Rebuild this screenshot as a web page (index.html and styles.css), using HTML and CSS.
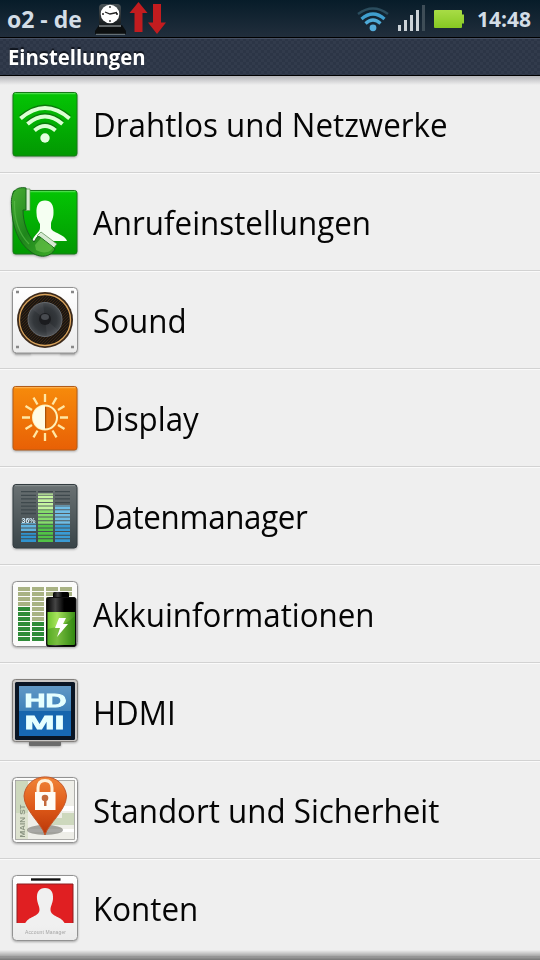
FILE: index.html
```
<!DOCTYPE html>
<html lang="de">
<head>
    <meta charset="UTF-8">
    <meta name="viewport" content="width=device-width, initial-scale=1.0">
    <title>Einstellungen</title>
    <link rel="stylesheet" href="styles.css">
</head>
<body>
    <div class="phone">
        <header class="status-bar">
            <span class="carrier">o2 - de</span>
            <svg class="status-left" width="74" height="37" viewBox="94 0 74 37">
                <defs>
                    <linearGradient id="hat" x1="0" y1="0" x2="0" y2="1"><stop offset="0" stop-color="#4a5357"/><stop offset="1" stop-color="#15191b"/></linearGradient>
                </defs>
                <rect x="99" y="4" width="22" height="22" rx="4" fill="url(#hat)"/>
                <path d="M99 25H122L126 31V34H95V31Z" fill="#0c0f10"/>
                <path d="M99 26H121" stroke="#b8c0c2" stroke-width="1"/>
                <path d="M96 34.3H125" stroke="#8d9598" stroke-width=".8"/>
                <circle cx="110" cy="14" r="9.3" fill="#fff"/>
                <path d="M110 6V8M110 20V22M102 14H104M116 14H118M105 12L110 14L117 12.500" stroke="#222" stroke-width="1.300" fill="none"/>
                <path d="M138.500 2L147.500 13H142.500V32H134.500V13H129.500Z" fill="#c21c1f"/>
                <path d="M157 34L166 22.500H161V4H153V22.500H148Z" fill="#c21c1f"/>
            </svg>
            <svg class="status-right" width="110" height="37" viewBox="356 0 110 37">
                <defs>
                    <linearGradient id="batt" x1="0" y1="0" x2="0" y2="1"><stop offset="0" stop-color="#a8dc46"/><stop offset="1" stop-color="#86c922"/></linearGradient>
                </defs>
                <g fill="none" stroke-width="3.200">
                    <path d="M358 14Q373 3 388 14" stroke="#2b4d5e" stroke-width="2.400"/>
                    <path d="M361.500 19Q373 9 384.500 19" stroke="#3f9fcf"/>
                    <path d="M365.500 23.500Q373 16.500 380.500 23.500" stroke="#4fabd8"/>
                </g>
                <circle cx="373" cy="27.800" r="3.400" fill="#55addb"/>
                <g fill="#ccd3d8">
                    <rect x="398" y="25" width="3" height="6"/><rect x="404" y="20" width="3" height="11"/>
                    <rect x="410" y="15" width="3" height="16"/><rect x="416" y="10" width="3" height="21"/>
                </g>
                <rect x="422" y="5" width="3" height="26" fill="#3e4d57"/>
                <path d="M435 10H461Q462 10 462 11V14.500H464V23.500H462V27Q462 28 461 28H435Q434 28 434 27V11Q434 10 435 10Z" fill="url(#batt)"/>
            </svg>
            <span class="clock">14:48</span>
        </header>
        <h1 class="title-bar"><span>Einstellungen</span></h1>

        <ul class="settings">
            <li class="row">
                <svg class="icon" viewBox="0 0 93 98">
                    <defs>
                        <linearGradient id="green" x1="0" y1="0" x2="0" y2="1"><stop offset="0" stop-color="#04c504"/><stop offset="1" stop-color="#029802"/></linearGradient>
                    </defs>
                    <rect x="13" y="17.500" width="64" height="63.500" rx="2.500" fill="url(#green)" stroke="#167a16"/>
                    <path d="M14.500 18.700H75.500" stroke="#5be25b"/>
                    <g fill="none" stroke="#0a7a0a" stroke-width="4" transform="translate(0 -1.500)">
                        <path d="M20.500 43.500Q45 22.500 69.500 43.500"/><path d="M27.500 49Q45 34 62.500 49"/><path d="M34.500 55.500Q45 46.500 55.500 55.500"/>
                    </g>
                    <g fill="none" stroke="#dcffd4" stroke-width="4">
                        <path d="M20.500 43.500Q45 22.500 69.500 43.500"/><path d="M27.500 49Q45 34 62.500 49"/><path d="M34.500 55.500Q45 46.500 55.500 55.500"/>
                    </g>
                    <circle cx="45" cy="63" r="4.700" fill="#e4ffdf"/>
                </svg>
                <span class="label">Drahtlos und Netzwerke</span>
            </li>
            <li class="row">
                <svg class="icon" viewBox="0 0 93 98">
                    <defs>
                        <linearGradient id="phone" x1="0" y1="0" x2="1" y2="1"><stop offset="0" stop-color="#49ad35"/><stop offset=".5" stop-color="#1e861b"/><stop offset="1" stop-color="#3fae2a"/></linearGradient>
                    </defs>
                    <rect x="13" y="17.500" width="64" height="63.500" rx="2.500" fill="url(#green)" stroke="#167a16"/>
                    <path d="M24 18.700H75.500" stroke="#5be25b"/>
                    <path d="M45 27.500C51 27.500 54 32 53.500 40C53.500 46 51 48 51 51V55C52 60 65 61 67 68H32C34 62 40 59 40 55V51C38 48 36.500 45 36.500 40C36 32 39 27.500 45 27.500Z" fill="#f5fff2"/>
                    <path d="M25 16H30V37.500H25Z" fill="#d7ead3" stroke="#5b9b52" stroke-width=".7"/>
                    <path d="M41 59L57 71L53 76L37 63Z" fill="#d7ead3" stroke="#4e8647" stroke-width=".7"/>
                    <path d="M26 15C15 13 10.500 20 11.500 33C12 53 18 70 31 79C39 85 50 85 55 76L53 74L40 64C37 62 36 66 34 69C28 62 23 50 23 37H26Z" fill="url(#phone)" stroke="#17641a"/>
                    <path d="M14.500 28C14 46 19 61 29 71" fill="none" stroke="#5fc04e" stroke-width="1.200" opacity=".6"/>
                    <path d="M35 72L41 65L53 74C51 80 43 81 36 77Z" fill="#6cc44e" opacity=".6"/>
                </svg>
                <span class="label">Anrufeinstellungen</span>
            </li>
            <li class="row">
                <svg class="icon" viewBox="0 0 93 98">
                    <defs>
                        <linearGradient id="white" x1="0" y1="0" x2="0" y2="1"><stop offset="0" stop-color="#fff"/><stop offset="1" stop-color="#ebebeb"/></linearGradient>
                        <radialGradient id="cone"><stop offset="0" stop-color="#25272a"/><stop offset=".7" stop-color="#34383c"/><stop offset="1" stop-color="#4b4f53"/></radialGradient>
                        <pattern id="mesh" width="3" height="3" patternUnits="userSpaceOnUse"><path d="M0 3L3 0" stroke="#4b3015" stroke-width=".6"/></pattern>
                    </defs>
                    <path d="M15 82.500H31M60 82.500H75" stroke="#a0a0a0" stroke-width="1.500"/>
                    <rect x="12.500" y="16.500" width="65" height="65.500" rx="4" fill="url(#white)" stroke="#929292"/>
                    <path d="M16 21H19M71 21H74M16 76H19M71 76H74" stroke="#888" stroke-width="2.500"/>
                    <circle cx="45" cy="49" r="28" fill="#3c2a1b"/>
                    <circle cx="45" cy="49" r="25.500" fill="#1c1611" stroke="#d9a35c" stroke-width="1.300"/>
                    <circle cx="45" cy="49" r="24" fill="url(#mesh)"/>
                    <circle cx="45" cy="48.500" r="17" fill="url(#cone)" stroke="#65696e"/>
                    <path d="M45 48L32 38A17 17 0 0 1 43 32ZM45 48L58 59A17 17 0 0 1 47 65Z" fill="#777c82" opacity=".15"/>
                    <circle cx="45" cy="48" r="6" fill="#1b1c1f"/>
                    <ellipse cx="45" cy="46" rx="4" ry="3" fill="#484b50"/>
                </svg>
                <span class="label">Sound</span>
            </li>
            <li class="row">
                <svg class="icon" viewBox="0 0 93 98">
                    <defs>
                        <linearGradient id="orange" x1="0" y1="0" x2="0" y2="1"><stop offset="0" stop-color="#f78b0b"/><stop offset="1" stop-color="#e86005"/></linearGradient>
                    </defs>
                    <rect x="13" y="17.500" width="64" height="63.500" rx="2.500" fill="url(#orange)" stroke="#b35c18"/>
                    <path d="M14.500 18.700H75.500" stroke="#ffb85a"/>
                    <path d="M45 25V33M45 64V72M22 48.500H30M60 48.500H68M33.500 28.600L37.500 35.500M52.500 61.500L56.500 68.400M56.500 28.600L52.500 35.500M37.500 61.500L33.500 68.400M25.500 37L32 41M58 56L64.500 60M64.500 37L58 41M32 56L25.500 60" stroke="#ffe7a4" stroke-width="2.300" fill="none"/>
                    <circle cx="45" cy="48.500" r="12" fill="#e8750f" stroke="#fff0b8" stroke-width="2"/>
                    <path d="M45 36.500A12 12 0 0 0 45 60.500Z" fill="#fffbe4"/>
                    <path d="M45.700 38V59" stroke="#9d4a05"/>
                </svg>
                <span class="label">Display</span>
            </li>
            <li class="row">
                <svg class="icon" viewBox="0 0 93 98">
                    <defs>
                        <linearGradient id="slate" x1="0" y1="0" x2="0" y2="1"><stop offset="0" stop-color="#6a7173"/><stop offset="1" stop-color="#394448"/></linearGradient>
                    </defs>
                    <rect x="13" y="17.500" width="64" height="63.500" rx="3" fill="url(#slate)" stroke="#333c40"/>
                    <path d="M15 18.700H75" stroke="#8d9496"/>
                    <!-- empty segments, then the filled part of each column -->
                    <g fill="none" stroke-width="15">
                        <path d="M28.500 24V48M62.500 24V38" stroke="#3e484c" stroke-dasharray="1.300 2.340"/>
                        <path d="M45.500 24V26" stroke="#3e484c" stroke-dasharray="1.300 2.340"/>
                        <path d="M28.500 75V66" stroke="#2f93cf" stroke-dasharray="2.640 1"/>
                        <path d="M28.500 64.100V56" stroke="#62b4e0" stroke-dasharray="2.640 1"/>
                        <path d="M62.500 75V57" stroke="#3a9bd4" stroke-dasharray="2.640 1"/>
                        <path d="M62.500 56.800V38" stroke="#70bde5" stroke-dasharray="2.640 1"/>
                        <path d="M45.500 75V57" stroke="#51c346" stroke-dasharray="2.640 1"/>
                        <path d="M45.500 56.800V42" stroke="#86dc6c" stroke-dasharray="2.640 1"/>
                        <path d="M45.500 42.240V26.500" stroke="#c5f5a0" stroke-dasharray="2.640 1"/>
                    </g>
                    <text class="percent" x="21.500" y="55.500">36%</text>
                </svg>
                <span class="label label-tight">Datenmanager</span>
            </li>
            <li class="row">
                <svg class="icon" viewBox="0 0 93 98">
                    <defs>
                        <linearGradient id="cell" x1="0" y1="0" x2="1" y2="0"><stop offset="0" stop-color="#6fc72f"/><stop offset=".35" stop-color="#a7e35c"/><stop offset="1" stop-color="#3a8f16"/></linearGradient>
                        <linearGradient id="cellcap" x1="0" y1="0" x2="1" y2="0"><stop offset="0" stop-color="#000"/><stop offset=".3" stop-color="#454545"/><stop offset=".6" stop-color="#000"/></linearGradient>
                    </defs>
                    <rect x="12.500" y="16.500" width="65" height="65" rx="4" fill="#fbfbfa" stroke="#929292"/>
                    <g fill="none" stroke-width="12" stroke-dasharray="4 1">
                        <path d="M24 22V42M38 22V57M52 22V42M66 22V42" stroke="#a8b283"/>
                        <path d="M24 42V76M38 57V76" stroke="#2e8b38"/>
                    </g>
                    <rect x="53" y="27" width="16" height="6" rx="1.500" fill="url(#cellcap)"/>
                    <rect x="46.500" y="32.500" width="29.500" height="49" rx="2" fill="url(#cellcap)" stroke="#111"/>
                    <path d="M47.500 47H75V78.500Q75 80 73.500 80H49Q47.500 80 47.500 78.500Z" fill="url(#cell)"/>
                    <path d="M47.500 64Q64 62 75 51V80H47.500Z" fill="#247b0b" opacity=".35"/>
                    <path d="M59 53L66 53L63 59H68L57 72L60 63H55Z" fill="#fff"/>
                </svg>
                <span class="label">Akkuinformationen</span>
            </li>
            <li class="row">
                <svg class="icon" viewBox="0 0 93 98">
                    <defs>
                        <linearGradient id="screen" x1="0" y1="0" x2="0" y2="1"><stop offset="0" stop-color="#6198c6"/><stop offset=".49" stop-color="#3f82ba"/><stop offset=".5" stop-color="#1765ac"/><stop offset="1" stop-color="#1768b5"/></linearGradient>
                    </defs>
                    <rect x="29" y="78" width="32" height="5" rx="1" fill="#6c6c6c"/>
                    <rect x="12.500" y="16.500" width="65" height="62" rx="3" fill="#c9c7c5" stroke="#83807d"/>
                    <rect x="15" y="19" width="60" height="58" rx="1.500" fill="#0a1524"/>
                    <rect x="19" y="23" width="52" height="50" fill="url(#screen)"/>
                    <text class="hdmi" x="24.500" y="44" textLength="42" lengthAdjust="spacingAndGlyphs">HD</text>
                    <text class="hdmi" x="24.500" y="65.500" textLength="40" lengthAdjust="spacingAndGlyphs">MI</text>
                </svg>
                <span class="label">HDMI</span>
            </li>
            <li class="row">
                <svg class="icon" viewBox="0 0 93 98">
                    <defs>
                        <linearGradient id="pin" x1="0" y1="0" x2="0" y2="1"><stop offset="0" stop-color="#f08437"/><stop offset=".5" stop-color="#df5b19"/><stop offset="1" stop-color="#b93508"/></linearGradient>
                    </defs>
                    <rect x="12.500" y="16.500" width="65" height="65" rx="4" fill="#fcfcfb" stroke="#929292"/>
                    <rect x="15.500" y="19.500" width="59" height="59" fill="#eeeee8" stroke="#9c9c98" stroke-width=".8"/>
                    <path d="M16 20H28V52H16ZM62 52H74V64H50V57H62Z" fill="#cdd8bd"/>
                    <path d="M16 52H28V78H16Z" fill="#dde2cf"/>
                    <path d="M28 68H74V71H28ZM60 45H74V50H60Z" fill="#fff"/>
                    <text class="street" transform="translate(25 76.500) rotate(-90)" textLength="33" lengthAdjust="spacingAndGlyphs">MAIN ST</text>
                    <ellipse cx="45" cy="69" rx="18" ry="5" fill="#6e6e68" opacity=".6"/>
                    <path d="M45 74C42 63 24 49 24 35A21.300 20.500 0 0 1 66.500 35C66.500 49 48 63 45 74Z" fill="url(#pin)" stroke="#c4572a"/>
                    <path d="M38 33V27Q38 19.500 45 19.500Q52 19.500 52 27V33" fill="none" stroke="#fff1da" stroke-width="3"/>
                    <rect x="35" y="31" width="20.500" height="18" fill="#fffdf7"/>
                    <circle cx="45" cy="37" r="3.300" fill="#c46a3b"/><path d="M44 38H46.500V45H44Z" fill="#c46a3b"/>
                </svg>
                <span class="label">Standort und Sicherheit</span>
            </li>
            <li class="row">
                <svg class="icon" viewBox="0 0 93 98">
                    <rect x="12.500" y="16.500" width="65" height="65" rx="4" fill="url(#white)" stroke="#929292"/>
                    <rect x="31" y="19.300" width="29.500" height="2.400" fill="#111"/>
                    <rect x="17" y="25" width="56" height="39" fill="#e01f22"/>
                    <path d="M17 64V25H73V64" fill="none" stroke="#8d1e20"/>
                    <path d="M45 29C51 29 53.500 33 53 40C52.500 45 50.500 47 50.500 51C51 58 62 57 65 65H25C28 57 39 58 39.500 51C39.500 47 37.500 45 37 40C36.500 33 39 29 45 29Z" fill="#f0f0f0"/>
                    <text class="caption" x="25" y="74.500" textLength="41">Account Manager</text>
                </svg>
                <span class="label">Konten</span>
            </li>
        </ul>
    </div>
</body>
</html>
```

FILE: styles.css
```
* {
    box-sizing: border-box;
}
body {
    margin: 0;
    background: #efefef;
    font-family: "Open Sans", "Noto Sans", sans-serif;
}
.phone {
    position: relative;
    width: 540px;
    height: 960px;
    overflow: hidden;
}
.status-bar {
    display: flex;
    align-items: center;
    height: 37px;
    padding: 0 9px 0 7px;
    background: linear-gradient(#071c29, #212e3c);
    color: #d3dde6;
    font-weight: 700;
}
.carrier {
    width: 87px;
    font-size: 23px;
    white-space: nowrap;
}
.status-right {
    margin-left: auto;
}
.clock {
    width: 65px;
    font-size: 21px;
    text-align: right;
    white-space: nowrap;
}
.title-bar {
    display: flex;
    align-items: center;
    height: 39px;
    margin: 0;
    padding: 0 8px;
    border-top: 1px solid #000;
    border-bottom: 1px solid #000;
    box-shadow: inset 0 1px #465063;
    background: repeating-conic-gradient(#2c3546 0 25%, #323b4c 0 50%) 0 0 / 6px 6px;
    color: #fff;
    font-size: 21.5px;
    font-weight: 700;
    text-shadow: 0 -2px 1px #10151e;
}
.title-bar span {
    transform: scaleX(0.943);
    transform-origin: left;
}
.settings {
    margin: -1px 0 0;
    padding: 0;
    list-style: none;
}
.row {
    display: flex;
    align-items: center;
    height: 98px;
    border-top: 1px solid #fafafa;
    border-bottom: 1px solid #d2d2d2;
    background: #efefef;
}
.row:first-child {
    background: linear-gradient(#b4b4b8, #efefef 9px);
    border-top-color: #000;
}
.icon {
    flex: none;
    width: 93px;
    height: 98px;
    filter: drop-shadow(0 1px 1px rgba(0, 0, 0, 0.3));
}
/* slightly condensed face */
.label {
    color: #050505;
    font-size: 33.5px;
    white-space: nowrap;
    transform: scaleX(0.935);
    transform-origin: left;
}
.label-tight {
    letter-spacing: -0.35px;
}
.percent {
    fill: #d8f1ff;
    font: 700 7px "Liberation Sans", sans-serif;
}
.hdmi {
    fill: #e6ffff;
    stroke: #e6ffff;
    stroke-width: 0.8px;
    font: 700 18px "Liberation Sans", sans-serif;
}
.street {
    fill: #8b9482;
    font: 700 8px "Liberation Sans", sans-serif;
}
.caption {
    fill: #a5a5a5;
    font: 5px "Liberation Sans", sans-serif;
}
.phone::after {
    content: "";
    position: absolute;
    left: 0;
    right: 0;
    bottom: 0;
    height: 10px;
    background: linear-gradient(rgba(120, 120, 120, 0), #777);
}
```
